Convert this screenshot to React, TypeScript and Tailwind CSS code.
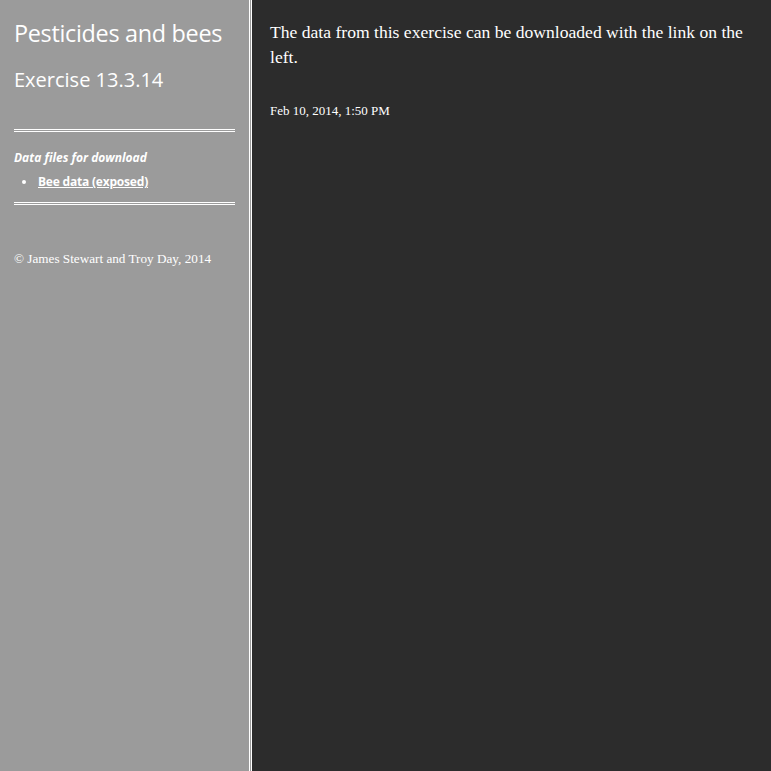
export default function App() {
  return (
    <div className="flex min-h-[771px] w-full bg-[#2c2c2c]">
      <aside
        className="w-[252px] shrink-0 border-r-[3px] border-double border-white bg-[#9b9b9b] px-[14px] pt-[18px] text-white"
        style={{ fontFamily: '"Open Sans", "DejaVu Sans", sans-serif' }}
      >
        <h1 className="text-[23.4px] leading-[30px] font-normal tracking-[-0.3px]">Pesticides and bees</h1>
        <h2 className="mt-[20px] text-[20px] leading-[24px] font-normal">Exercise 13.3.14</h2>
        <div className="mt-[37px] h-[3px] border-y border-white" />
        <div className="mt-[18px] text-[12px] font-bold italic leading-[16px]">Data files for download</div>
        <ul className="mt-[8px] pl-[8px] text-[12px] font-bold leading-[16px]">
          <li className="flex items-center gap-[12px]">
            <span className="inline-block h-[4px] w-[4px] rounded-full bg-white" />
            <a href="#" className="underline tracking-[-0.2px]">Bee data (exposed)</a>
          </li>
        </ul>
        <div className="mt-[12px] h-[3px] border-y border-white" />
        <p
          className="mt-[46px] text-[13.2px] leading-[16px]"
          style={{ fontFamily: '"Liberation Serif", serif' }}
        >
          © James Stewart and Troy Day, 2014
        </p>
      </aside>
      <main
        className="flex-1 pl-[18px] pr-[10px] pt-[20px] text-white"
        style={{ fontFamily: '"Liberation Serif", serif' }}
      >
        <p className="text-[17.6px] leading-[25px]">
          The data from this exercise can be downloaded with the link on the left.
        </p>
        <p className="mt-[33px] text-[13px] leading-[16px]">Feb 10, 2014, 1:50 PM</p>
      </main>
    </div>
  );
}
